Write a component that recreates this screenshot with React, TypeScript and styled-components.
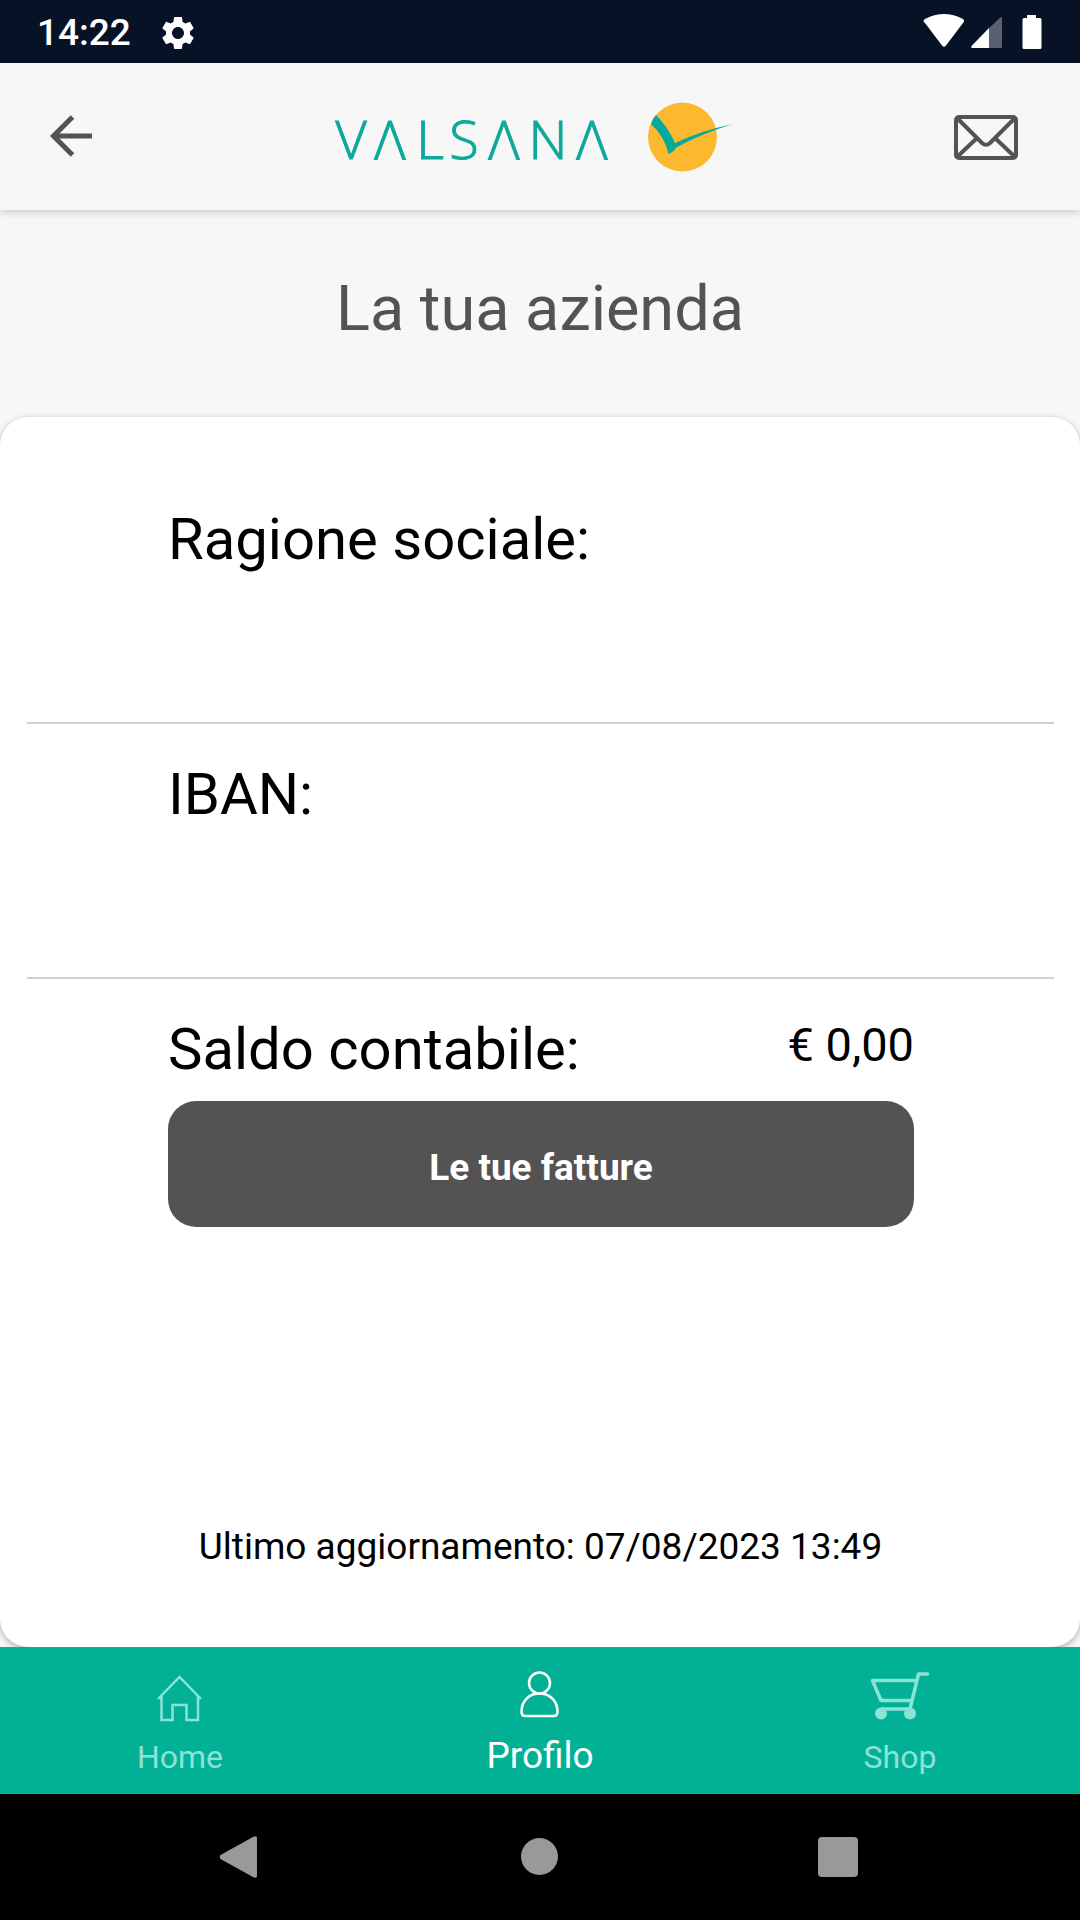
import React from "react";
import styled, { createGlobalStyle } from "styled-components";
import { MdSettings } from "react-icons/md";

const GlobalStyle = createGlobalStyle`
  *, *::before, *::after { box-sizing: border-box; }
  body { margin: 0; background: #000; }
  button { font: inherit; border: 0; padding: 0; background: none; color: inherit; cursor: pointer; }
  h1, dl, dt, dd, p { margin: 0; font-weight: 400; }
  svg { display: block; flex: none; }
`;

const Page = styled.div`
  min-height: 100vh;
  display: flex;
  flex-direction: column;
  background: #f7f7f7;
  color: #000;
  font-family: Roboto, "Liberation Sans", sans-serif;
`;

const StatusBar = styled.div`
  height: 63px;
  padding: 2px 38px 0 37px;
  display: flex;
  align-items: center;
  justify-content: space-between;
  background: #071226;
  color: #fff;
`;

const StatusGroup = styled.div`
  display: flex;
  align-items: center;
  gap: 27px;
`;

const Clock = styled.time`
  font-size: 37px;
  line-height: 44px;
  font-weight: 500;
`;

const Header = styled.header`
  position: relative;
  height: 147px;
  padding: 0 60px 0 48px;
  display: grid;
  grid-template-columns: 66px auto 66px;
  align-items: center;
  justify-content: space-between;
  background: #f7f7f7;
  box-shadow: 0 2px 8px rgba(0, 0, 0, 0.2);
`;

const IconButton = styled.button`
  display: flex;
  color: #535353;
`;

const SystemButton = styled.button`
  display: flex;
  color: #999;
`;

const Wordmark = styled.text`
  font-family: "Liberation Sans Narrow", "Open Sans", sans-serif;
  font-size: 54px;
  font-weight: 300;
  fill: #0fa89b;
  stroke: #0fa89b;
  stroke-width: 1px;
  text-anchor: middle;
`;

const Title = styled.h1`
  padding: 62px 24px 71px;
  font-size: 63px;
  line-height: 74px;
  text-align: center;
  color: #535353;
`;

const Card = styled.main`
  flex: 1;
  display: flex;
  flex-direction: column;
  padding: 52px 26px 78px 27px;
  border-radius: 28px;
  background: #fff;
  box-shadow: 0 2px 6px rgba(0, 0, 0, 0.3);
`;

const Row = styled.div<{ $divided?: boolean }>`
  min-height: ${(p) => (p.$divided ? "255px" : "0")};
  padding: 36px 140px 0 141px;
  display: flex;
  justify-content: space-between;
  border-bottom: ${(p) => (p.$divided ? "2px solid #d0d0d0" : "0")};
`;

const Label = styled.dt`
  font-size: 58px;
  line-height: 68px;
`;

const Value = styled.dd`
  font-size: 47px;
  line-height: 60px;
`;

const Actions = styled.div`
  padding: 18px 140px 0 141px;
`;

const PrimaryButton = styled.button`
  width: 100%;
  height: 126px;
  padding-top: 6px;
  border-radius: 28px;
  background: #535353;
  color: #fff;
  font-size: 37px;
  font-weight: 700;
`;

const Updated = styled.p`
  margin-top: auto;
  font-size: 37px;
  line-height: 44px;
  text-align: center;
`;

const TabBar = styled.nav`
  position: relative;
  height: 147px;
  padding-bottom: 17px;
  display: grid;
  grid-template-columns: repeat(3, 1fr);
  background: #02b096;
`;

const Tab = styled.a<{ $active?: boolean }>`
  display: flex;
  flex-direction: column;
  align-items: center;
  justify-content: flex-end;
  gap: 8px;
  color: ${(p) => (p.$active ? "#fff" : "#8be3d6")};
  font-size: ${(p) => (p.$active ? "37px" : "32px")};
  line-height: ${(p) => (p.$active ? "43px" : "40px")};
  text-decoration: none;
`;

const SystemBar = styled.div`
  height: 126px;
  padding: 0 217px;
  display: flex;
  align-items: center;
  justify-content: space-between;
  background: #000;
`;

const StatusIcons = () => (
  <svg width="120" height="40" viewBox="0 0 120 40" fill="#fff" aria-hidden="true">
    <path d="M3 10Q0 8 3 6Q22-4 41 6Q43 8 41 10L24 32.500Q22 35 20 32.500Z" />
    <path d="M80 5Q80 3.500 78.500 4.500L67 15V35H79Q80 35 80 34Z" fill="#596170" />
    <path d="M67 15V35H50Q48.500 35 49.500 33Z" />
    <path d="M105 2h9v3h4q1.500 0 1.500 1.500v28q0 1.500-1.500 1.500h-16q-1.500 0-1.500-1.500v-28q0-1.500 1.500-1.500h3z" />
  </svg>
);

const BackIcon = () => (
  <svg width="44" height="44" viewBox="0 0 44 44" fill="none" stroke="currentColor" strokeWidth="5" aria-hidden="true">
    <path d="M24.500 2L5.500 21L24.500 40M5 21H44" />
  </svg>
);

const MailIcon = () => (
  <svg width="66" height="46" viewBox="0 0 66 46" fill="none" stroke="currentColor" strokeWidth="4" aria-hidden="true">
    <rect x="2" y="3" width="60" height="41" rx="3" />
    <path d="M3 4L28 29Q32 32.500 36 29L61 4M3 43L23 24M61 43L41 24" />
  </svg>
);

const Logo = () => (
  <svg width="400" height="80" viewBox="0 0 400 80" role="img" aria-label="Valsana">
    <Wordmark x="17 56 96 130 170 214 258" y="62">VΛLSΛNΛ</Wordmark>
    <g transform="translate(0 3)">
      <circle cx="348.500" cy="37" r="34.500" fill="#fcb92f" />
      <path
        d="M322 15Q334 27 341 43Q366 31 399 24Q366 34 341.500 48Q341 51 334.500 54Q331 37 317 24Q319 18 322 15Z"
        fill="#05aa9d"
      />
    </g>
  </svg>
);

const HomeIcon = () => (
  <svg width="63" height="63" viewBox="0 0 63 63" fill="none" stroke="currentColor" strokeWidth="2.500" aria-hidden="true">
    <path d="M9 33L30.500 11L52 33M12.500 30V54H23.500V39H37.500V54H49V30" />
  </svg>
);

const ProfileIcon = () => (
  <svg width="63" height="63" viewBox="0 0 63 63" fill="none" stroke="currentColor" strokeWidth="2.500" aria-hidden="true">
    <circle cx="30.500" cy="20" r="10.500" />
    <path d="M12.500 49C12.500 37 21 30.500 30.500 30.500S48.500 37 48.500 49Q48.500 53 44.500 53H16.500Q12.500 53 12.500 49Z" />
  </svg>
);

const CartIcon = () => (
  <svg width="63" height="63" viewBox="0 0 63 63" fill="none" stroke="currentColor" strokeWidth="3.500" strokeLinecap="round" strokeLinejoin="round" aria-hidden="true">
    <path d="M58.500 8H49.500L41 43H13M46 14.500H3.500L12 34.500H42" />
    <circle cx="12" cy="47.500" r="6" fill="currentColor" stroke="none" />
    <circle cx="41" cy="47.500" r="6" fill="currentColor" stroke="none" />
  </svg>
);

const TriangleIcon = () => (
  <svg width="48" height="48" viewBox="0 0 48 48" fill="currentColor" aria-hidden="true">
    <path d="M3.500 26Q2 24 3.500 22L36 4Q40 2 40 5V43Q40 46 36 44Z" />
  </svg>
);

const CircleIcon = () => (
  <svg width="48" height="48" viewBox="0 0 48 48" fill="currentColor" aria-hidden="true">
    <circle cx="23.500" cy="23.500" r="18.500" />
  </svg>
);

const SquareIcon = () => (
  <svg width="48" height="48" viewBox="0 0 48 48" fill="currentColor" aria-hidden="true">
    <rect x="3" y="4" width="40" height="40" rx="4" />
  </svg>
);

const tabs = [
  { label: "Home", href: "#home", Icon: HomeIcon, active: false },
  { label: "Profilo", href: "#profilo", Icon: ProfileIcon, active: true },
  { label: "Shop", href: "#shop", Icon: CartIcon, active: false },
];

export default function App() {
  return (
    <>
      <GlobalStyle />
      <Page>
        <StatusBar>
          <StatusGroup>
            <Clock>14:22</Clock>
            <MdSettings size={40} aria-hidden="true" />
          </StatusGroup>
          <StatusIcons />
        </StatusBar>
        <Header>
          <IconButton aria-label="Indietro">
            <BackIcon />
          </IconButton>
          <Logo />
          <IconButton aria-label="Messaggi">
            <MailIcon />
          </IconButton>
        </Header>
        <Title>La tua azienda</Title>
        <Card>
          <dl>
            <Row $divided>
              <Label>Ragione sociale:</Label>
            </Row>
            <Row $divided>
              <Label>IBAN:</Label>
            </Row>
            <Row>
              <Label>Saldo contabile:</Label>
              <Value>€ 0,00</Value>
            </Row>
          </dl>
          <Actions>
            <PrimaryButton>Le tue fatture</PrimaryButton>
          </Actions>
          <Updated>Ultimo aggiornamento: 07/08/2023 13:49</Updated>
        </Card>
        <TabBar>
          {tabs.map(({ label, href, Icon, active }) => (
            <Tab key={label} href={href} $active={active} aria-current={active ? "page" : undefined}>
              <Icon />
              <span>{label}</span>
            </Tab>
          ))}
        </TabBar>
        <SystemBar>
          <SystemButton aria-label="Back">
            <TriangleIcon />
          </SystemButton>
          <SystemButton aria-label="Home screen">
            <CircleIcon />
          </SystemButton>
          <SystemButton aria-label="Recent apps">
            <SquareIcon />
          </SystemButton>
        </SystemBar>
      </Page>
    </>
  );
}
